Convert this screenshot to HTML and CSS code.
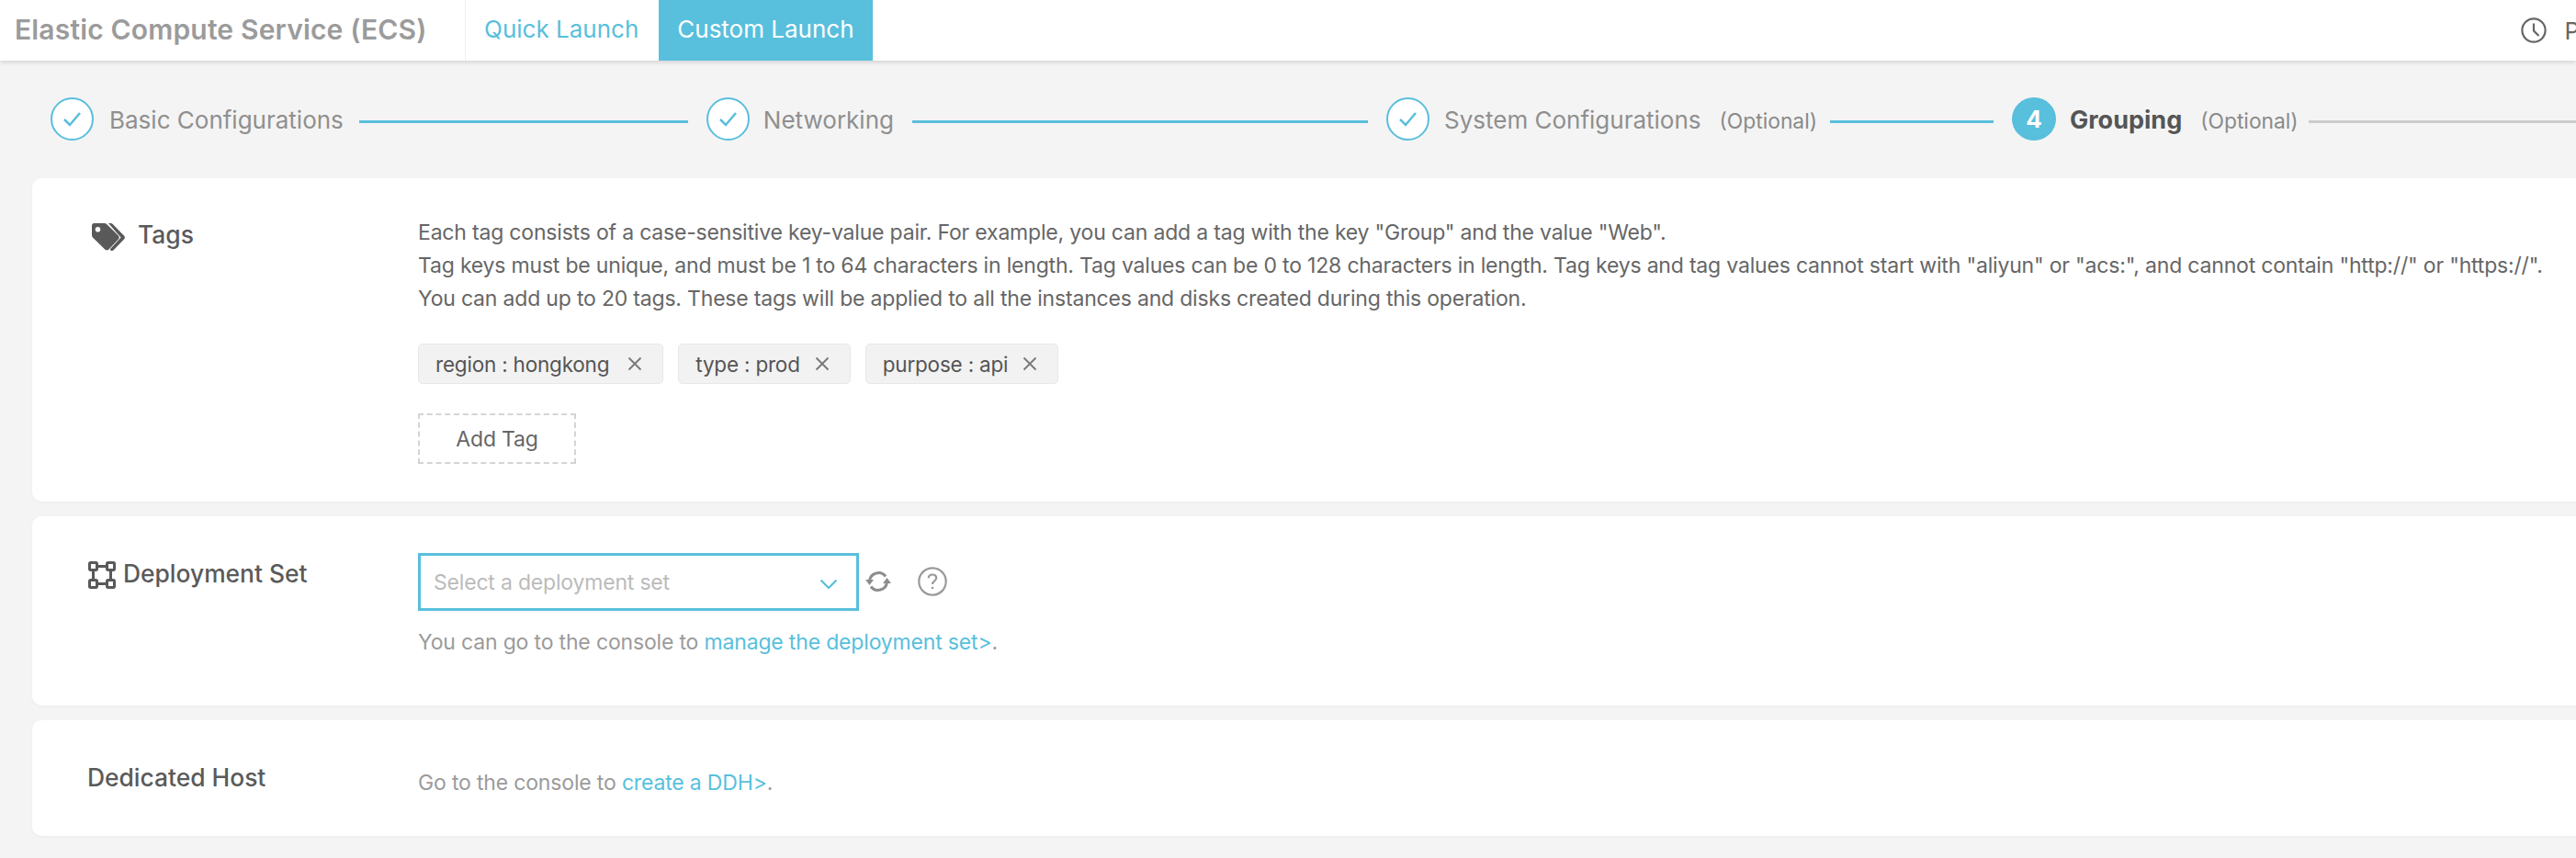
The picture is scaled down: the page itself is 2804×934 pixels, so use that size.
FILE: index.html
```html
<!DOCTYPE html>
<html lang="en">
<head>
<meta charset="utf-8">
<title>Elastic Compute Service (ECS)</title>
<link rel="stylesheet" href="styles.css">
</head>
<body>
<header class="topbar">
  <div class="brand">Elastic Compute Service (ECS)</div>
  <nav class="tabs">
    <a class="tab">Quick Launch</a>
    <a class="tab tab-active">Custom Launch</a>
  </nav>
  <div class="top-right">
    <svg class="clock" viewBox="0 0 28 28"><circle cx="14" cy="14" r="12.6"/><path d="M14 6.5V14.5L19.5 20"/></svg>
    <span>P</span>
  </div>
</header>

<ol class="steps">
  <li class="step">
    <span class="dot"><svg viewBox="0 0 47 47"><path d="M15 24L21 30L32 17"/></svg></span>
    <span class="step-label">Basic Configurations</span>
  </li>
  <li class="bar bar-1"></li>
  <li class="step">
    <span class="dot"><svg viewBox="0 0 47 47"><path d="M15 24L21 30L32 17"/></svg></span>
    <span class="step-label step-label-net">Networking</span>
  </li>
  <li class="bar bar-2"></li>
  <li class="step">
    <span class="dot"><svg viewBox="0 0 47 47"><path d="M15 24L21 30L32 17"/></svg></span>
    <span class="step-label step-label-sys">System Configurations</span>
    <span class="optional">(Optional)</span>
  </li>
  <li class="bar bar-3"></li>
  <li class="step">
    <span class="dot dot-current">4</span>
    <span class="step-label step-label-current">Grouping</span>
    <span class="optional">(Optional)</span>
  </li>
  <li class="bar bar-4"></li>
</ol>

<main class="cards">
  <section class="card card-tags">
    <h2 class="card-title title-tags">
      <svg class="icon-tag" viewBox="0 0 36 30"><path class="fill" d="M2.5 0H13.5C14.6 0 15.6.4 16.4 1.2L28.8 13.4C30 14.6 30 16.4 28.8 17.6L18.4 28.4C17.2 29.6 15.4 29.6 14.2 28.4L1.2 15.8C.4 15 0 14 0 13V2.5C0 1.1 1.1 0 2.5 0ZM6.5 4A2.8 2.8 0 1 0 6.5 9.6A2.8 2.8 0 1 0 6.5 4Z"/><path class="fill" d="M18 0H20.4C21.4 0 22.2.4 23 1.2L35 13.6C36.2 14.8 36.2 16.2 35 17.4L23.6 29.2C22.8 30 21.4 30.2 20.6 29.4L19.6 28.4L31.6 15.6Z"/></svg>
      Tags
    </h2>
    <div class="card-body">
      <p class="desc">Each tag consists of a case-sensitive key-value pair. For example, you can add a tag with the key "Group" and the value "Web".<br>Tag keys must be unique, and must be 1 to 64 characters in length. Tag values can be 0 to 128 characters in length. Tag keys and tag values cannot start with "aliyun" or "acs:", and cannot contain "http://" or "https://".<br>You can add up to 20 tags. These tags will be applied to all the instances and disks created during this operation.</p>
      <div class="chips">
        <span class="chip chip-wide">region : hongkong<svg class="x" viewBox="0 0 16 16"><path d="M1.500 1.500L14.500 14.500M14.500 1.500L1.500 14.500"/></svg></span>
        <span class="chip">type : prod<svg class="x" viewBox="0 0 16 16"><path d="M1.500 1.500L14.500 14.500M14.500 1.500L1.500 14.500"/></svg></span>
        <span class="chip">purpose : api<svg class="x" viewBox="0 0 16 16"><path d="M1.500 1.500L14.500 14.500M14.500 1.500L1.500 14.500"/></svg></span>
      </div>
      <button class="add-tag">Add Tag</button>
    </div>
  </section>

  <section class="card card-deploy">
    <h2 class="card-title title-deploy">
      <svg class="icon-deploy" viewBox="0 0 30 30"><rect x="1.500" y="1.500" width="8" height="8" rx="1.200"/><rect x="20.500" y="1.500" width="8" height="8" rx="1.200"/><rect x="1.500" y="20.500" width="8" height="8" rx="1.200"/><rect x="20.500" y="20.500" width="8" height="8" rx="1.200"/><path d="M9.500 5.500H20.500M9.500 24.500H20.500M5.500 9.500V20.500M24.500 9.500V20.500"/></svg>
      Deployment Set
    </h2>
    <div class="card-body">
      <div class="select-row">
        <div class="select">
          <span>Select a deployment set</span>
          <svg class="chev" viewBox="0 0 20 12"><path d="M1.500 1.500L10 10L18.500 1.500"/></svg>
        </div>
        <svg class="refresh" viewBox="0 0 28 28"><path class="arc" d="M4.500 13A9.800 9.800 0 0 1 22 8.500M23.500 15A9.800 9.800 0 0 1 6 19.500"/><path class="tip" d="M0 12H9L4.500 18ZM19 16H28L23.500 10Z"/></svg>
        <svg class="help" viewBox="0 0 32 32"><circle cx="16" cy="16" r="14.700"/><path d="M11.800 12.300C11.800 9.900 13.700 8.500 16 8.500C18.400 8.500 20.200 10 20.200 12.200C20.200 15.300 16 15.500 16 19"/><circle class="help-dot" cx="16" cy="23" r="1.300"/></svg>
      </div>
      <p class="hint">You can go to the console to <a class="link">manage the deployment set&gt;</a>.</p>
    </div>
  </section>

  <section class="card card-host">
    <h2 class="card-title title-host">Dedicated Host</h2>
    <div class="card-body">
      <p class="hint hint-host">Go to the console to <a class="link">create a DDH&gt;</a>.</p>
    </div>
  </section>
</main>
</body>
</html>
```

FILE: styles.css
```css
* { box-sizing: border-box; }
html, body { margin: 0; padding: 0; width: 2804px; height: 934px; overflow: hidden; }
body { background: #f4f4f4; font-family: Inter, "Liberation Sans", sans-serif; color: #666; }

.topbar { height: 66px; background: #fff; display: flex; align-items: stretch; box-shadow: 0 2px 5px rgba(0,0,0,.14); position: relative; }
.brand { width: 507px; padding-left: 16px; border-right: 1px solid #efefef; font-size: 30px; font-weight: 600; letter-spacing: .17px; line-height: 64px; color: #9b9b9b; white-space: nowrap; }
.tabs { display: flex; padding-left: 20px; }
.tab { font-size: 26px; line-height: 64px; padding: 0 22px 0 0; color: #58bfdc; white-space: nowrap; }
.tab-active { background: #58bfdc; color: #fff; padding: 0 20px; }
.top-right { margin-left: auto; display: flex; align-items: center; gap: 19px; font-size: 26px; color: #666; margin-right: -4px; }
.clock { width: 28px; height: 28px; fill: none; stroke: #666; stroke-width: 2.200; }

.steps { list-style: none; margin: 0; padding: 40px 0 0 55px; height: 128px; display: flex; align-items: flex-start; }
.step { display: flex; align-items: center; height: 47px; white-space: nowrap; }
.dot { width: 47px; height: 47px; border: 2px solid #58bfdc; border-radius: 50%; background: #fff; flex: none; display: flex; align-items: center; justify-content: center; }
.dot svg { width: 47px; height: 47px; fill: none; stroke: #58bfdc; stroke-width: 2.500; flex: none; }
.dot-current { width: 48px; background: #58bfdc; color: #fff; font-size: 26px; font-weight: 700; }
.step-label { margin-left: 17px; font-size: 26px; color: #8f8f8f; padding-top: 2px; }
.step-label-net { margin-left: 15px; }
.step-label-sys { margin-left: 16px; }
.step-label-current { font-weight: 700; color: #555; margin-left: 15px; font-size: 27px; }
.optional { margin-left: 20px; font-size: 22.800px; color: #8a8a8a; padding-top: 4px; }
.step:last-of-type .optional { color: #666; }
.bar { height: 3px; margin-top: 25px; background: #58bfdc; flex: none; }
.bar-1 { width: 358px; margin-left: 17px; margin-right: 20px; }
.bar-2 { width: 496px; margin-left: 20px; margin-right: 20px; }
.bar-3 { width: 178px; margin-left: 14px; margin-right: 20px; }
.bar-4 { width: 320px; margin-left: 11px; background: #ccc; }

.cards { display: flex; flex-direction: column; gap: 16px; padding-left: 35px; width: 2860px; }
.card { background: #fff; border-radius: 10px; display: flex; box-shadow: 0 1px 3px rgba(0,0,0,.04); }
.card-tags { height: 352px; padding-top: 41px; }
.card-deploy { height: 206px; padding-top: 40px; }
.card-host { height: 126px; padding-top: 46px; }
.card-title { margin: 0; width: 420px; flex: none; display: flex; align-items: flex-start; font-size: 26.400px; font-weight: 500; color: #5a5a5a; line-height: 32px; white-space: nowrap; }
.title-tags { padding-left: 65px; gap: 14px; padding-top: 4px; }
.icon-tag { width: 36px; height: 30px; margin-top: 4px; flex: none; }
.icon-tag .fill { fill: #595959; }
.title-deploy { padding-left: 61px; gap: 8px; padding-top: 6px; }
.icon-deploy { width: 30px; height: 30px; margin-top: 3px; flex: none; fill: none; stroke: #595959; stroke-width: 3; }
.title-host { padding-left: 60px; padding-top: 0; }
.card-body { flex: none; min-width: 0; }

.desc { margin: 0; font-size: 23px; letter-spacing: -.19px; line-height: 36px; color: #666; white-space: nowrap; }
.chips { display: flex; gap: 16px; margin-top: 31px; }
.chip { height: 44px; display: flex; align-items: center; gap: 16px; padding: 0 22px 0 18px; background: #f2f2f2; border: 1px solid #e8e8e8; border-radius: 5px; font-size: 22.500px; letter-spacing: -.2px; color: #555; white-space: nowrap; }
.chip-wide { gap: 20px; }
.x { width: 16px; height: 16px; fill: none; stroke: #777; stroke-width: 1.800; flex: none; }
.add-tag { display: block; margin-top: 32px; width: 172px; height: 55px; background: #fff; border: 2px dashed #d4d4d4; font: inherit; font-size: 23px; letter-spacing: -.19px; color: #666; padding: 0; }

.select-row { display: flex; align-items: center; }
.select { width: 480px; height: 63px; border: 3px solid #58bfdc; display: flex; align-items: center; justify-content: space-between; padding: 0 20px 0 14px; font-size: 23px; letter-spacing: -.19px; color: #bbb; white-space: nowrap; }
.chev { width: 20px; height: 12px; fill: none; stroke: #58bfdc; stroke-width: 2.200; margin-top: 4px; }
.refresh { width: 28px; height: 28px; margin-left: 7px; margin-top: -2px; flex: none; fill: none; }
.refresh .arc { stroke: #8d8d8d; stroke-width: 3; fill: none; }
.refresh .tip { fill: #8d8d8d; }
.help { width: 32px; height: 32px; margin-left: 29px; margin-top: -2px; flex: none; fill: none; stroke: #9a9a9a; stroke-width: 2.200; }
.help .help-dot { fill: #9a9a9a; stroke: none; }
.hint { margin: 18px 0 0; font-size: 23px; letter-spacing: -.17px; line-height: 32px; color: #9b9b9b; white-space: nowrap; }
.hint-host { margin-top: 6px; }
.link { color: #58bfdc; }
```
